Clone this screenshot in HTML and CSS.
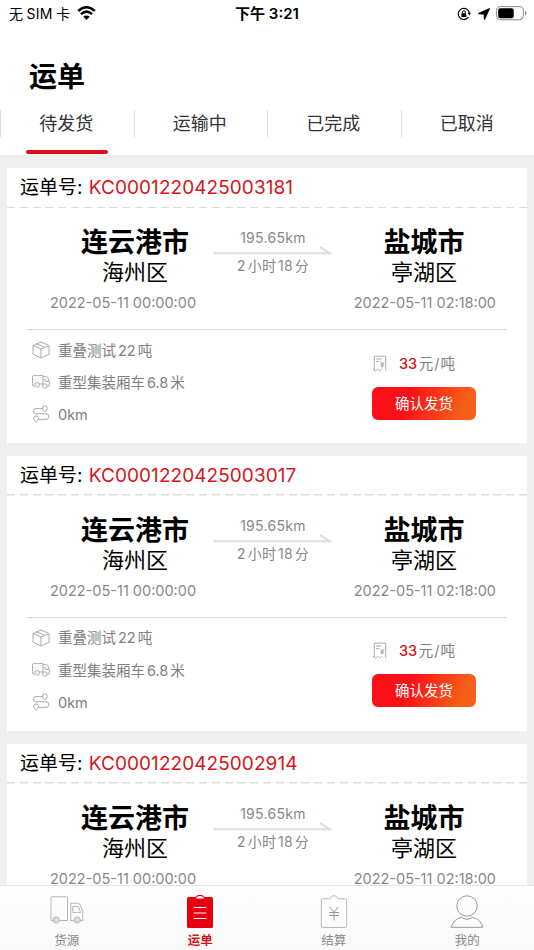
FILE: index.html
```html
<!DOCTYPE html>
<html lang="zh-CN">
<head>
    <meta charset="UTF-8">
    <meta name="viewport" content="width=device-width, initial-scale=1.0">
    <title>运单</title>
    <link rel="stylesheet" href="styles.css">
</head>
<body>
    <!-- Shared icons -->
    <svg class="sprite" xmlns="http://www.w3.org/2000/svg">
        <symbol id="icon-box" viewBox="0 0 18 18">
            <path d="M9 1 L17 4.5 V13.3 L9 17 L1 13.3 V4.5 Z M1 4.5 L9 8 L17 4.5 M9 8 V17 M4.8 2.9 L12.9 6.3"/>
        </symbol>
        <symbol id="icon-truck" viewBox="0 0 18 14">
            <path d="M3 11 H1.5 Q.6 11 .6 10 V1.6 Q.6 .6 1.6 .6 H11 V9 H7.4 M11 1.6 H13.8 Q16 1.6 16.4 4 L17.3 6.6 V11 H15.4 M13.2 3.5 V6.5 H16.8"/>
            <circle cx="5.1" cy="9.8" r="2.3"/>
            <circle cx="12.8" cy="11" r="2.2"/>
        </symbol>
        <symbol id="icon-route" viewBox="0 0 18 18">
            <path d="M10 3.6 H4 A2.6 2.6 0 0 0 4 8.8 H14 A2.8 2.8 0 0 1 14 14.4 H7"/>
            <path d="M12.8 7 Q10.4 4.8 10.4 3.2 A2.4 2.4 0 0 1 15.2 3.2 Q15.2 4.8 12.8 7 Z M4.2 17.2 Q1.8 15 1.8 13.4 A2.4 2.4 0 0 1 6.6 13.4 Q6.6 15 4.2 17.2 Z"/>
        </symbol>
        <symbol id="icon-bill" viewBox="0 0 14 17">
            <path d="M1.3 15.6 V1.2 H12.7 V15.6 M.3 14.4 L2.6 16 L4.6 14.3 L6.6 16 L8.7 14.3 M3 4 H8.5 M3 6.6 H6 M7.2 6.6 L9.2 9 L11.2 6.6 M9.2 9 V12.5 M7.4 9.2 H11 M7.4 10.9 H11"/>
        </symbol>
        <symbol id="icon-arrow" viewBox="0 0 120 11">
            <path d="M0 8.2 H117 L107 2.2"/>
        </symbol>
    </svg>

    <!-- Status bar -->
    <div class="status-bar">
        <div class="status-left">
            <span>无<span class="sim">SIM</span>卡</span>
            <svg class="wifi" viewBox="0 0 19 14">
                <path d="M1.2 5 Q9.5 -2.6 17.8 5 M4 8.1 Q9.5 3.2 15 8.1" fill="none" stroke="#000" stroke-width="2.5"/>
                <path d="M9.5 14 L6.2 10.7 Q9.5 8.1 12.8 10.7 Z"/>
            </svg>
        </div>
        <div class="status-time">下午 3:21</div>
        <div class="status-right">
            <svg class="lock" viewBox="0 0 14 14">
                <path d="M12.4 6.2 A5.6 5.6 0 1 0 11.4 10.2" fill="none" stroke="#000" stroke-width="1.2"/>
                <path d="M10.6 5.8 H14 L12.4 8.4 Z"/>
                <rect x="4.4" y="6.2" width="4.9" height="3.7" rx=".5"/>
                <path d="M5.4 6.5 V5.2 A1.45 1.45 0 0 1 8.3 5.2 V6.5" fill="none" stroke="#000"/>
            </svg>
            <svg class="location" viewBox="0 0 12 12">
                <path d="M11.8 .3 L6.8 11.5 Q6.3 12 6.1 11.2 V6.2 L.7 6 Q0 5.7 .6 5.2 Z" stroke="#000" stroke-width=".6"/>
            </svg>
            <svg class="battery" viewBox="0 0 31 15">
                <rect x=".6" y=".6" width="26.8" height="13.2" rx="4" fill="none" stroke="#888"/>
                <rect x="2.2" y="2.2" width="15.5" height="10" rx="2"/>
                <path d="M29 5 Q30.5 5.5 30.5 7.2 Q30.5 8.9 29 9.4 Z" fill="#888"/>
            </svg>
        </div>
    </div>

    <header>
        <h1>运单</h1>
        <nav class="tabs">
            <div class="tab active"><span>待发货</span></div>
            <div class="tab"><span>运输中</span></div>
            <div class="tab"><span>已完成</span></div>
            <div class="tab"><span>已取消</span></div>
        </nav>
    </header>

    <main class="list">
        <section class="card">
            <div class="card-head">运单号: <span class="order-no">KC0001220425003181</span></div>
            <div class="route">
                <div class="place from">
                    <h2>连云港市</h2>
                    <p class="district">海州区</p>
                </div>
                <div class="distance">
                    <p class="km">195.65km</p>
                    <svg class="arrow"><use href="#icon-arrow"/></svg>
                    <p class="duration">2<i></i>小时<i></i>18<i></i>分</p>
                </div>
                <div class="place to">
                    <h2>盐城市</h2>
                    <p class="district">亭湖区</p>
                </div>
            </div>
            <div class="dates">
                <span>2022-05-11 00:00:00</span>
                <span>2022-05-11 02:18:00</span>
            </div>
            <div class="card-body">
                <ul class="info">
                    <li><svg><use href="#icon-box"/></svg><span>重叠测试<i></i>22<i></i>吨</span></li>
                    <li><svg class="truck"><use href="#icon-truck"/></svg><span>重型集装厢车<i></i>6.8<i></i>米</span></li>
                    <li><svg><use href="#icon-route"/></svg><span>0km</span></li>
                </ul>
                <div class="action">
                    <div class="price"><svg><use href="#icon-bill"/></svg><b>33</b><span>元<em>/</em>吨</span></div>
                    <button>确认发货</button>
                </div>
            </div>
        </section>

        <section class="card">
            <div class="card-head">运单号: <span class="order-no">KC0001220425003017</span></div>
            <div class="route">
                <div class="place from">
                    <h2>连云港市</h2>
                    <p class="district">海州区</p>
                </div>
                <div class="distance">
                    <p class="km">195.65km</p>
                    <svg class="arrow"><use href="#icon-arrow"/></svg>
                    <p class="duration">2<i></i>小时<i></i>18<i></i>分</p>
                </div>
                <div class="place to">
                    <h2>盐城市</h2>
                    <p class="district">亭湖区</p>
                </div>
            </div>
            <div class="dates">
                <span>2022-05-11 00:00:00</span>
                <span>2022-05-11 02:18:00</span>
            </div>
            <div class="card-body">
                <ul class="info">
                    <li><svg><use href="#icon-box"/></svg><span>重叠测试<i></i>22<i></i>吨</span></li>
                    <li><svg class="truck"><use href="#icon-truck"/></svg><span>重型集装厢车<i></i>6.8<i></i>米</span></li>
                    <li><svg><use href="#icon-route"/></svg><span>0km</span></li>
                </ul>
                <div class="action">
                    <div class="price"><svg><use href="#icon-bill"/></svg><b>33</b><span>元<em>/</em>吨</span></div>
                    <button>确认发货</button>
                </div>
            </div>
        </section>

        <section class="card">
            <div class="card-head">运单号: <span class="order-no">KC0001220425002914</span></div>
            <div class="route">
                <div class="place from">
                    <h2>连云港市</h2>
                    <p class="district">海州区</p>
                </div>
                <div class="distance">
                    <p class="km">195.65km</p>
                    <svg class="arrow"><use href="#icon-arrow"/></svg>
                    <p class="duration">2<i></i>小时<i></i>18<i></i>分</p>
                </div>
                <div class="place to">
                    <h2>盐城市</h2>
                    <p class="district">亭湖区</p>
                </div>
            </div>
            <div class="dates">
                <span>2022-05-11 00:00:00</span>
                <span>2022-05-11 02:18:00</span>
            </div>
        </section>
    </main>

    <!-- Bottom navigation -->
    <footer class="tab-bar">
        <a class="bar-item">
            <svg viewBox="0 0 34 34">
                <path d="M3.5 25.5 H1 V2.8 Q1 1.8 2 1.8 H16.5 Q17.5 1.8 17.5 2.8 V25.5 H9 M23.5 25.5 H20.8 V8.2 H27.5 Q29.5 8.2 30.2 10 L32.8 16 V25.5 H30.5 M22.8 11.5 V17.5 H30.6 L28.3 11.5 Z"/>
                <circle cx="6.2" cy="25" r="3.2"/><circle cx="6.2" cy="25" r="1.7"/>
                <circle cx="27.2" cy="25" r="3.2"/><circle cx="27.2" cy="25" r="1.7"/>
            </svg>
            <span>货源</span>
        </a>
        <a class="bar-item current">
            <svg viewBox="0 0 34 34">
                <rect x="4" y="2" width="26" height="31" rx="1.5" fill="#e60012" stroke="none"/>
                <path d="M12.8 4 V1.8 H14.6 V.5 H19.4 V1.8 H21.2 V4 Z" fill="#fff" stroke="#e60012"/>
                <path d="M10.7 12.5 H23.3 M10.7 18 H23.3 M10.7 23.5 H23.3" stroke="#fff"/>
            </svg>
            <span>运单</span>
        </a>
        <a class="bar-item">
            <svg viewBox="0 0 34 34">
                <path d="M12.5 3.8 H5.5 Q4.3 3.8 4.3 5 V31.2 Q4.3 32.4 5.5 32.4 H28.5 Q29.7 32.4 29.7 31.2 V5 Q29.7 3.8 28.5 3.8 H21.5 C20 3.8 20.2 .7 17 .7 C13.8 .7 14 3.8 12.5 3.8 Z"/>
                <path class="yuan" d="M12.8 12 L17 17 L21.2 12 M17 17 V25.5 M12 17.5 H22 M12 20.5 H22"/>
            </svg>
            <span>结算</span>
        </a>
        <a class="bar-item me">
            <svg viewBox="0 0 34 34">
                <circle cx="17" cy="11" r="10.2"/>
                <path d="M11.5 22.2 Q3 24.5 1.3 32.3 H32.7 Q31 24.5 22.5 22.2 Q17 26.3 11.5 22.2 Z"/>
            </svg>
            <span>我的</span>
        </a>
    </footer>
</body>
</html>
```

FILE: styles.css
```css
/* General Styles */
* {
    box-sizing: border-box;
    margin: 0;
    padding: 0;
}

body {
    font-family: Inter, "Noto Sans CJK SC", sans-serif;
    background-color: #efefef;
    color: #000;
    display: flex;
    flex-direction: column;
    height: 100vh;
    overflow: hidden;
}

svg {
    display: block;
    flex: none;
}

.sprite {
    display: none;
}

/* Gap between Chinese characters and digits */
i {
    display: inline-block;
    width: 2px;
}

/* Status bar */
.status-bar {
    height: 28px;
    flex: none;
    padding: 0 7px 0 9px;
    background-color: #fff;
    display: grid;
    grid-template-columns: 1fr auto 1fr;
    align-items: center;
    font-size: 14px;
    line-height: 28px;
}

.status-left,
.status-right {
    display: flex;
    align-items: center;
}

.status-left {
    gap: 7px;
}

.sim {
    margin: 0 3.5px;
    letter-spacing: 0.2px;
}

.wifi {
    width: 19px;
    height: 14px;
    margin-top: -2px;
}

.status-time {
    padding-right: 2px;
    font-size: 15px;
    font-weight: 600;
}

.status-right {
    justify-content: flex-end;
}

.lock {
    width: 14px;
    height: 14px;
    margin-right: 7px;
}

.location {
    width: 12px;
    height: 12px;
    margin-right: 6px;
}

.battery {
    width: 31px;
    height: 15px;
    margin-top: -1px;
}

/* Header */
header {
    height: 127px;
    flex: none;
    padding-top: 29px;
    background-color: #fff;
}

h1 {
    padding-left: 29px;
    font-size: 28px;
    line-height: 40px;
    font-weight: 600;
}

.tabs {
    display: grid;
    grid-template-columns: repeat(4, 1fr);
    padding-top: 13px;
}

.tab {
    display: flex;
    flex-direction: column;
    align-items: center;
    font-size: 18px;
    color: #333;
}

.tab span {
    width: 100%;
    padding-right: 2px;
    line-height: 27px;
    text-align: center;
    border-left: 1px solid #ddd;
}

.tab.active::after {
    content: "";
    width: 82px;
    height: 4px;
    margin-top: 13px;
    border-radius: 2px;
    background-color: #d9101a;
}

/* Order list */
.list {
    flex: 1;
    min-height: 0;
    overflow: hidden;
    padding: 13px 7px 0;
    display: flex;
    flex-direction: column;
    gap: 13px;
}

.card {
    height: 274.8px;
    flex: none;
    background-color: #fff;
}

.card-head {
    height: 40px;
    padding-left: 13px;
    font-size: 19px;
    line-height: 40px;
    background: repeating-linear-gradient(90deg, #ddd 0 8px, transparent 8px 12.8px) 0 100% / 100% 1.5px no-repeat;
}

.order-no {
    margin-left: 1px;
    letter-spacing: 0.06px;
    color: #d4161c;
}

/* Route */
.route {
    height: 78px;
    padding-top: 18px;
    display: grid;
    grid-template-columns: 206px 120px 1fr;
}

.place {
    text-align: center;
}

.place.from {
    padding-left: 50px;
}

.place.to {
    padding-right: 12px;
}

h2 {
    font-size: 27px;
    line-height: 34px;
    font-weight: 700;
}

.district {
    margin-top: -2px;
    font-size: 22px;
    line-height: 29px;
}

.distance {
    text-align: center;
    font-size: 14px;
    line-height: 18px;
    color: #888;
}

.km {
    padding-top: 3px;
    letter-spacing: 0.3px;
}

.arrow {
    width: 120px;
    height: 11px;
    margin: -2px 0 1px;
    fill: none;
    stroke: #ddd;
    stroke-width: 2;
}

.duration {
    letter-spacing: 0.15px;
}

.dates {
    height: 44px;
    margin: 0 20px;
    padding: 9px 11px 0 23px;
    display: flex;
    justify-content: space-between;
    font-size: 14.5px;
    line-height: 15px;
    color: #888;
    border-bottom: 1px solid #d8d8d8;
}

/* Card body */
.card-body {
    display: flex;
    justify-content: space-between;
    padding: 4px 51px 0 25px;
    font-size: 14.5px;
    color: #808080;
}

.info {
    list-style: none;
}

.info li {
    height: 32.2px;
    display: flex;
    align-items: center;
    gap: 8px;
}

.info span,
.price span {
    margin-top: -2px;
}

.info li:last-child span {
    margin-top: 0;
}

.info svg,
.price svg {
    width: 18px;
    height: 18px;
    fill: none;
    stroke: #aaa;
}

.info .truck {
    height: 14px;
}

.action {
    width: 104px;
    padding-top: 18px;
}

.price {
    height: 22px;
    display: flex;
    align-items: center;
}

.price svg {
    width: 14px;
    height: 17px;
    margin: 0 12px 0 1px;
}

.price b {
    margin-right: 2px;
    font-weight: 500;
    letter-spacing: -0.2px;
    color: #d4161c;
}

.price em {
    margin: 0 1px;
    font-style: normal;
}

button {
    width: 104px;
    height: 33px;
    margin-top: 12.5px;
    border: none;
    border-radius: 6px;
    background: linear-gradient(110deg, #fb1018 35%, #f55f17 85%);
    color: #fff;
    font-family: inherit;
    font-size: 14.5px;
    line-height: 33px;
}

/* Bottom navigation */
.tab-bar {
    height: 64px;
    flex: none;
    display: grid;
    grid-template-columns: repeat(4, 1fr);
    background: linear-gradient(#fefefe, #f9f9f9);
    box-shadow: 0 -1px 0 #e6e6e6;
}

.bar-item {
    display: flex;
    flex-direction: column;
    align-items: center;
    padding-top: 9px;
    font-size: 12.5px;
    line-height: 20px;
    color: #888;
}

.bar-item svg {
    width: 34px;
    height: 34px;
    margin-bottom: 2px;
    fill: none;
    stroke: #b5b5b5;
}

.bar-item .yuan,
.bar-item.me svg {
    stroke: #999;
}

.bar-item.current {
    color: #d4161c;
    font-weight: 700;
}
```
